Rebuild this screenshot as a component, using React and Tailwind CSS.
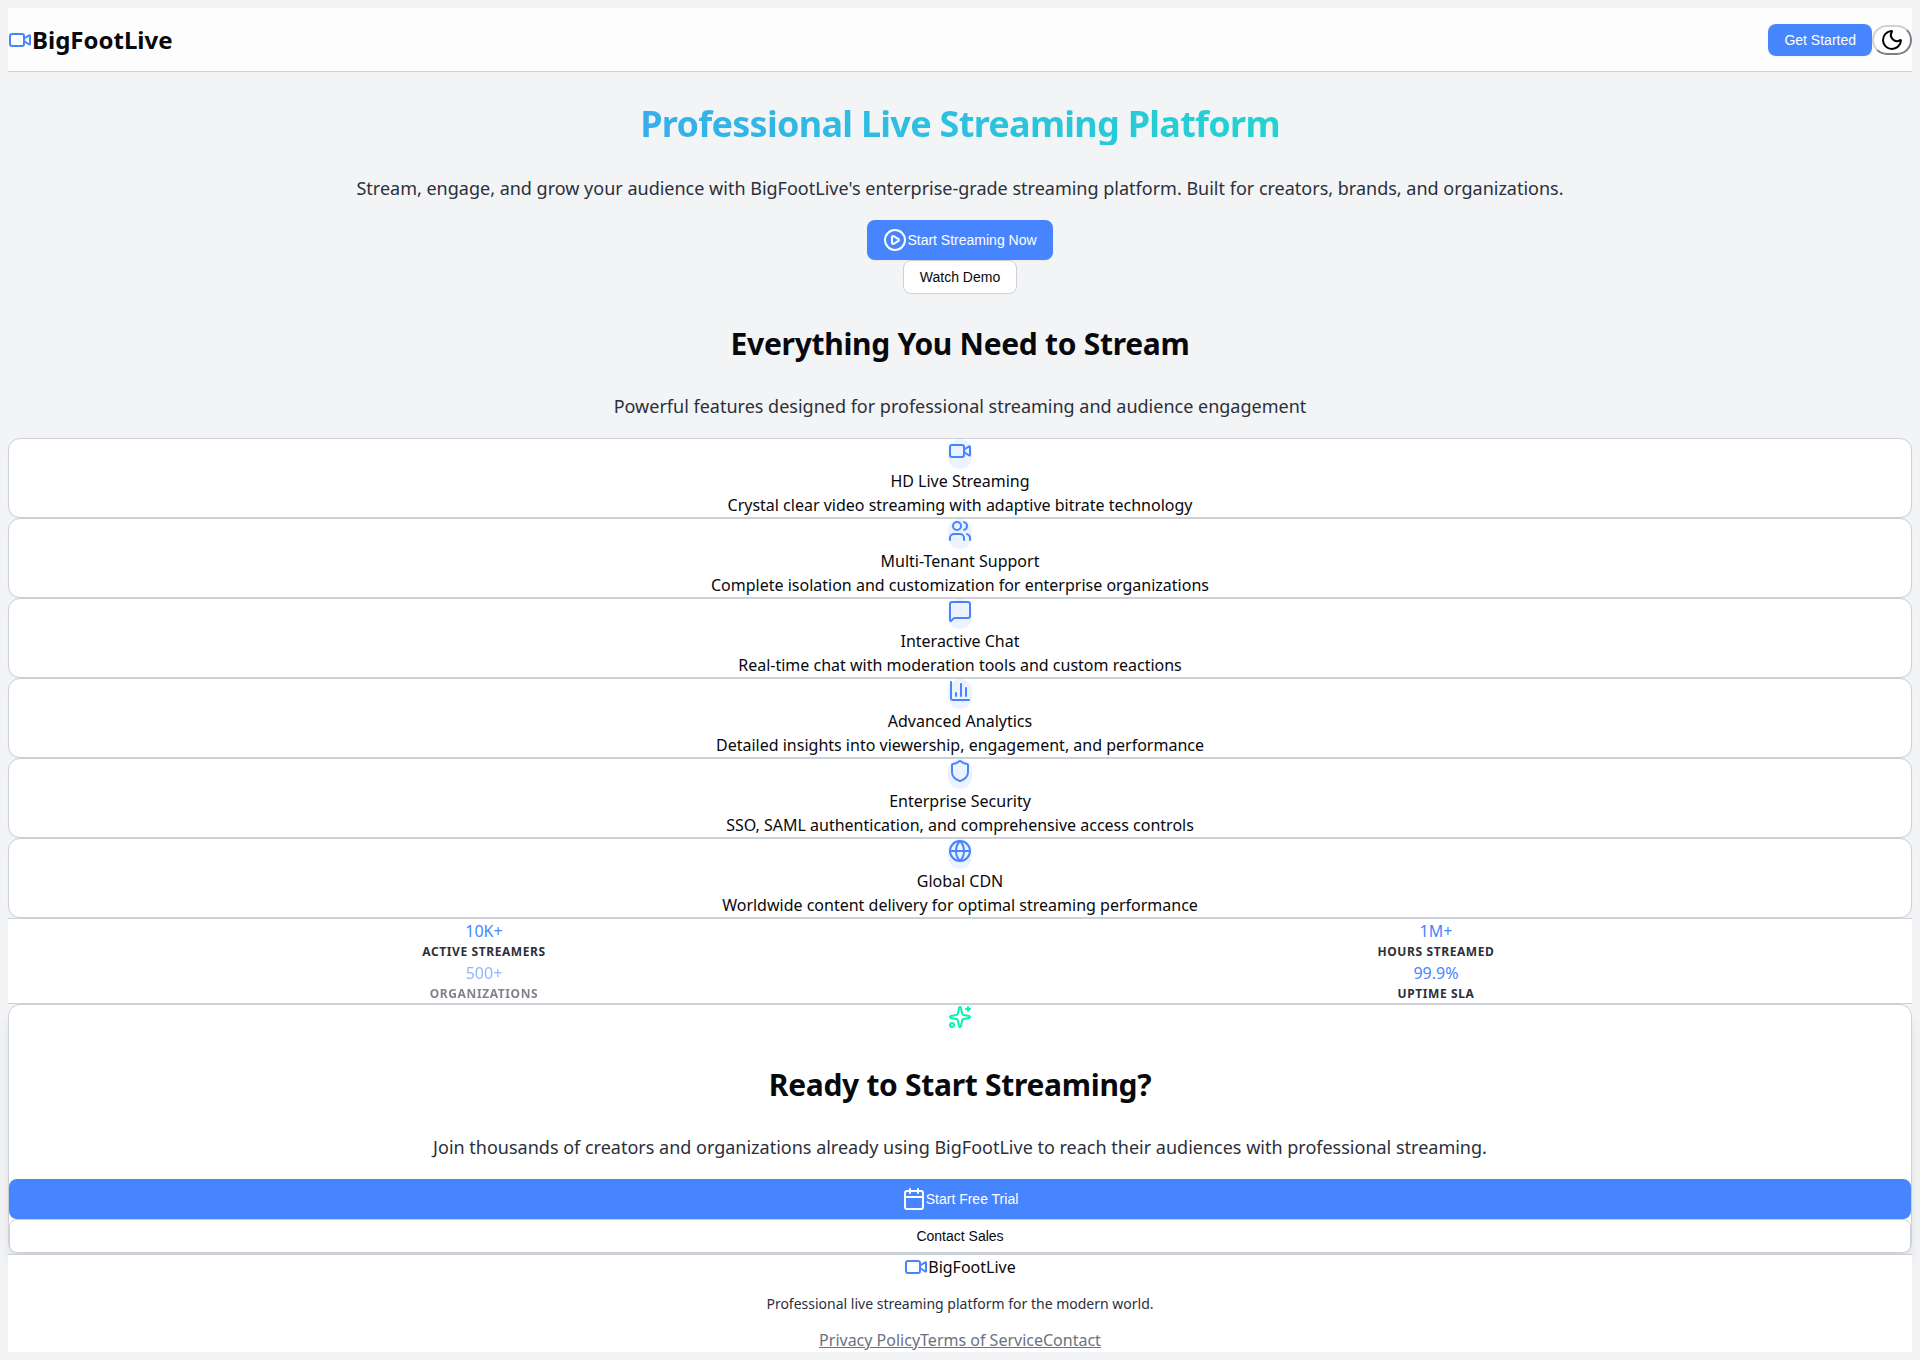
import { Video, Users, MessageSquare, ChartColumn, Shield, Globe, Moon, CirclePlay, Calendar } from "lucide-react";

const features = [
  { Icon: Video, title: "HD Live Streaming", text: "Crystal clear video streaming with adaptive bitrate technology" },
  { Icon: Users, title: "Multi-Tenant Support", text: "Complete isolation and customization for enterprise organizations" },
  { Icon: MessageSquare, title: "Interactive Chat", text: "Real-time chat with moderation tools and custom reactions" },
  { Icon: ChartColumn, title: "Advanced Analytics", text: "Detailed insights into viewership, engagement, and performance" },
  { Icon: Shield, title: "Enterprise Security", text: "SSO, SAML authentication, and comprehensive access controls" },
  { Icon: Globe, title: "Global CDN", text: "Worldwide content delivery for optimal streaming performance" },
];

const stats = [
  { value: "10K+", label: "Active Streamers" },
  { value: "1M+", label: "Hours Streamed" },
  { value: "500+", label: "Organizations", faded: true },
  { value: "99.9%", label: "Uptime SLA" },
];

const buttonBase = "inline-flex items-center justify-center px-4 text-sm font-['Liberation_Sans',sans-serif]";
const primary = `${buttonBase} bg-[#4785ff] text-white shadow-xs`;
const outline = `${buttonBase} h-[34px] rounded-lg border border-[#ccd1d9] bg-white text-[#08090d]`;

function SparklesIcon() {
  return (
    <svg
      className="size-6 text-[#00f5b0]"
      viewBox="0 0 24 24"
      fill="none"
      stroke="currentColor"
      strokeWidth="2"
      strokeLinecap="round"
      strokeLinejoin="round"
      aria-hidden="true"
    >
      <path d="M11.017 2.814a1 1 0 0 1 1.966 0l1.051 5.558a2 2 0 0 0 1.594 1.594l5.558 1.051a1 1 0 0 1 0 1.966l-5.558 1.051a2 2 0 0 0-1.594 1.594l-1.051 5.558a1 1 0 0 1-1.966 0l-1.051-5.558a2 2 0 0 0-1.594-1.594l-5.558-1.051a1 1 0 0 1 0-1.966l5.558-1.051a2 2 0 0 0 1.594-1.594z" />
      <path d="M20 2v4" />
      <path d="M22 4h-4" />
      <circle cx="4" cy="20" r="2" />
    </svg>
  );
}

function SectionTitle({ children }) {
  return <h2 className="my-[30px] text-3xl leading-[39px] font-bold tracking-[-0.01em]">{children}</h2>;
}

function Lead({ children }) {
  return <p className="mb-[18px] text-lg leading-[27px] text-[#2b303b]">{children}</p>;
}

export default function App() {
  return (
    <div className="min-h-screen bg-[#f3f4f6] p-2 font-['Noto_Sans',sans-serif] text-base text-[#08090d]">
      <header className="flex h-16 items-center justify-between border-b border-[#ccd1d9] bg-[#fdfdfd]">
        <div className="flex items-center">
          <Video className="size-6 text-[#4785ff]" />
          <span className="text-2xl font-bold">BigFootLive</span>
        </div>
        <div className="flex items-center">
          <button type="button" className={`${primary} h-8 rounded-lg`}>Get Started</button>
          <button
            type="button"
            aria-label="Toggle dark mode"
            className="flex h-[30px] w-10 items-center justify-center rounded-full border-2 border-t-[#ccd1d9] border-r-[#7c7f86] border-b-[#7c7f86] border-l-[#ccd1d9] bg-white text-black"
          >
            <Moon className="size-6" />
          </button>
        </div>
      </header>

      <main className="text-center">
        <section className="flow-root">
          <h1 className="my-[30px] bg-linear-to-r from-[#4785ff] to-[#00f5b0] bg-clip-text text-4xl leading-[43px] font-bold tracking-[-0.02em] text-transparent">
            Professional Live Streaming Platform
          </h1>
          <Lead>
            Stream, engage, and grow your audience with BigFootLive's enterprise-grade streaming platform. Built for
            creators, brands, and organizations.
          </Lead>
          <div className="flex flex-col items-center">
            <button type="button" className={`${primary} h-10 rounded-lg`}>
              <CirclePlay className="size-6" />
              Start Streaming Now
            </button>
            <button type="button" className={outline}>Watch Demo</button>
          </div>
        </section>

        <section className="flow-root">
          <SectionTitle>Everything You Need to Stream</SectionTitle>
          <Lead>Powerful features designed for professional streaming and audience engagement</Lead>
          <div>
            {features.map(({ Icon, title, text }) => (
              <article key={title} className="rounded-xl border border-[#ccd1d9] bg-white shadow-xs">
                <div className="mx-auto h-[30px] w-6 rounded-full bg-[#4785ff]/10">
                  <Icon className="size-6 text-[#4785ff]" />
                </div>
                <h3 className="leading-6">{title}</h3>
                <p className="leading-6">{text}</p>
              </article>
            ))}
          </div>
        </section>

        <section className="grid grid-cols-2 border-y border-[#ccd1d9] bg-white">
          {stats.map(({ value, label, faded }) => (
            <div key={label} className={faded ? "opacity-60" : ""}>
              <div className="leading-6 text-[#4785ff]">{value}</div>
              <div className="text-xs leading-[18px] font-bold tracking-wider text-[#2b303b] uppercase">{label}</div>
            </div>
          ))}
        </section>

        <section className="rounded-xl border border-[#ccd1d9] bg-white shadow-lg">
          <div className="flex h-[30px] justify-center">
            <SparklesIcon />
          </div>
          <SectionTitle>Ready to Start Streaming?</SectionTitle>
          <Lead>
            Join thousands of creators and organizations already using BigFootLive to reach their audiences with
            professional streaming.
          </Lead>
          <div className="flex flex-col">
            <button type="button" className={`${primary} h-10 rounded-lg`}>
              <Calendar className="size-6" />
              Start Free Trial
            </button>
            <button type="button" className={outline}>Contact Sales</button>
          </div>
        </section>
      </main>

      <footer className="relative border-t border-[#ccd1d9] bg-white text-center">
        <div className="flex items-center justify-center">
          <Video className="size-6 text-[#4785ff]" />
          <span>BigFootLive</span>
        </div>
        <p className="my-3.5 text-sm leading-[21px] text-[#2b303b]">
          Professional live streaming platform for the modern world.
        </p>
        <nav className="flex justify-center text-[#6b7280] underline">
          <a href="#privacy">Privacy Policy</a>
          <a href="#terms">Terms of Service</a>
          <a href="#contact">Contact</a>
        </nav>
      </footer>
    </div>
  );
}
